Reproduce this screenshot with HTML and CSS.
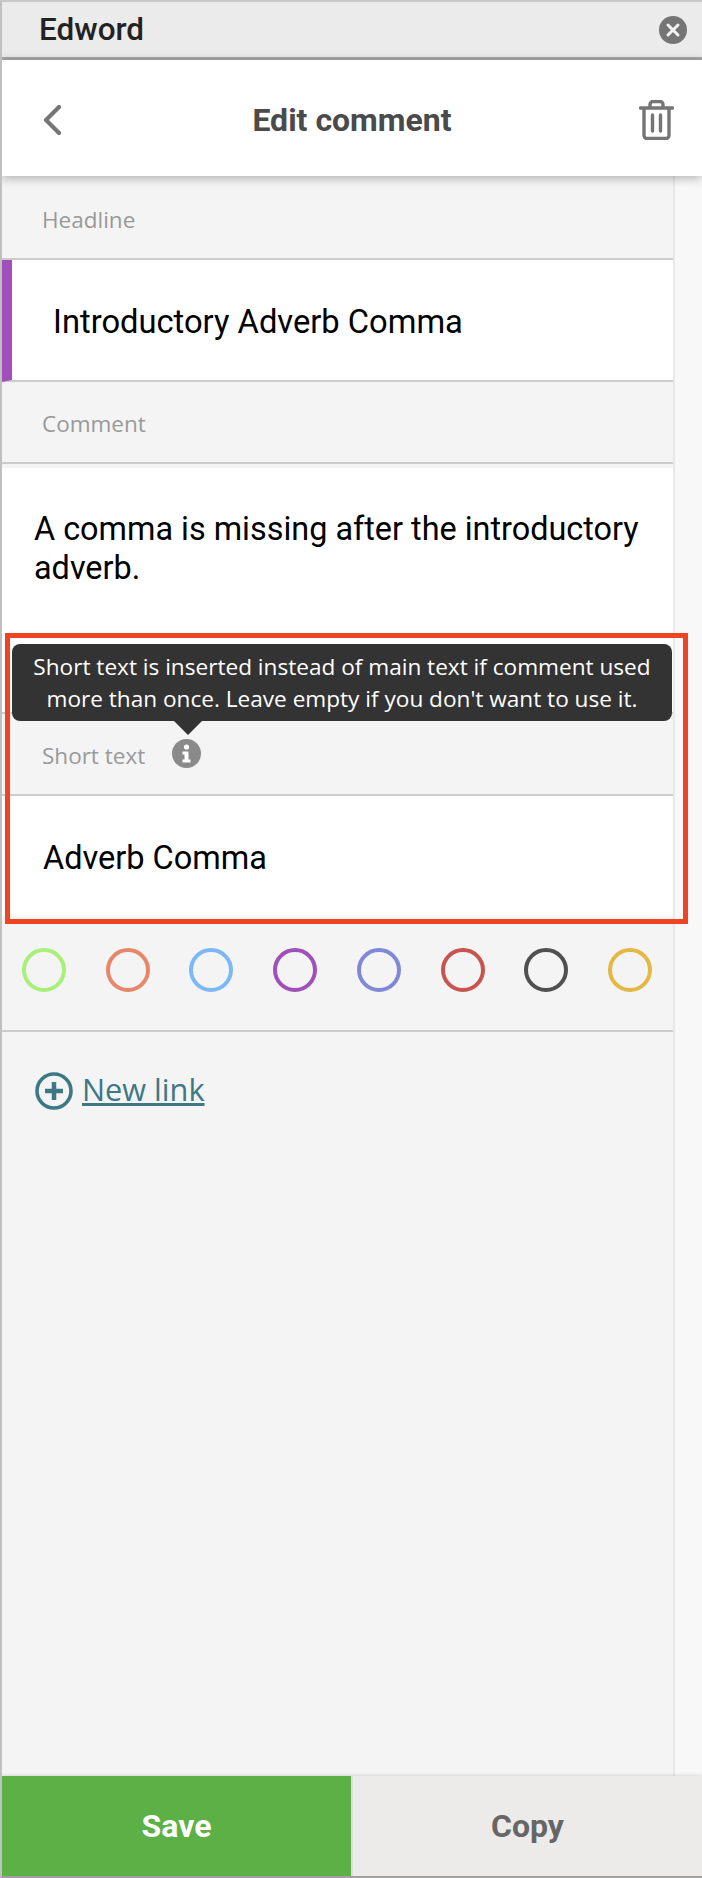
FILE: index.html
```html
<!DOCTYPE html>
<html>
	<head>
		<meta charset="utf-8">
		<title>Edword - Edit comment</title>
		<link rel="stylesheet" href="styles.css">
	</head>
	<body>
		<div class="window">
			<div class="titlebar">
				<span class="app-name">Edword</span>
				<svg class="close-icon" width="28" height="28" viewBox="0 0 28 28">
					<circle cx="14" cy="14" r="14" fill="#757575"/>
					<path d="M9 9l10 10M19 9l-10 10" stroke="#f2f2f2" stroke-width="3" stroke-linecap="round"/>
				</svg>
			</div>
			<div class="header">
				<svg class="back-icon" width="18" height="30" viewBox="0 0 18 30">
					<path d="M16 2L3 15l13 13" fill="none" stroke="#757575" stroke-width="4.200" stroke-linecap="round" stroke-linejoin="round"/>
				</svg>
				<h1 class="header-title">Edit comment</h1>
				<svg class="trash-icon" width="35" height="40" viewBox="0 0 35 40">
					<path d="M1.500 8h32M11 8V4.500a3 3 0 0 1 3-3h7a3 3 0 0 1 3 3V8M5 8v27.500a3 3 0 0 0 3 3h19a3 3 0 0 0 3-3V8M13.500 15v16M21.500 15v16" fill="none" stroke="#757575" stroke-width="3.400" stroke-linecap="round" stroke-linejoin="round"/>
				</svg>
			</div>
			<div class="panel">
				<div class="form">
					<div class="label-row label-first">Headline</div>
					<div class="field headline">Introductory Adverb Comma</div>
					<div class="label-row">Comment</div>
					<div class="comment-wrap">
						<div class="comment">A comma is missing after the introductory adverb.</div>
					</div>
					<div class="label-row short-label">
						Short text
						<svg class="info-icon" width="29" height="29" viewBox="0 0 29 29">
							<circle cx="14.500" cy="14.500" r="14.500" fill="#8a8a8a"/>
							<circle cx="14.500" cy="8" r="2.600" fill="#fff"/>
							<path d="M10.500 12.500h6v8h2v3h-8v-3h2v-5h-2z" fill="#fff"/>
						</svg>
					</div>
					<div class="field short-field">Adverb Comma</div>
					<div class="colors">
						<span class="dot dot-green"></span>
						<span class="dot dot-orange"></span>
						<span class="dot dot-blue"></span>
						<span class="dot dot-purple"></span>
						<span class="dot dot-indigo"></span>
						<span class="dot dot-red"></span>
						<span class="dot dot-black"></span>
						<span class="dot dot-yellow"></span>
					</div>
					<div class="links">
						<svg class="plus-icon" width="38" height="38" viewBox="0 0 38 38">
							<circle cx="19" cy="19" r="17" fill="none" stroke="#3d7885" stroke-width="3.600"/>
							<path d="M10 19h18M19 10v18" stroke="#3d7885" stroke-width="4.500"/>
						</svg>
						<a class="new-link" href="#">New link</a>
					</div>
				</div>
				<div class="track"></div>
			</div>
			<div class="footer">
				<div class="btn btn-save">Save</div>
				<div class="btn btn-copy">Copy</div>
			</div>
			<div class="tooltip">
				Short text is inserted instead of main text if comment used<br>
				more than once. Leave empty if you don't want to use it.
			</div>
			<div class="highlight"></div>
		</div>
	</body>
</html>
```

FILE: styles.css
```css
body
{
	margin: 0;
	background: #f4f4f4;
	font-family: "Roboto", "Liberation Sans", sans-serif;
}

.window
{
	position: relative;
	display: flex;
	flex-direction: column;
	box-sizing: border-box;
	width: 702px;
	height: 1878px;
	overflow: hidden;
	border-top: 2px solid #c8c8c8;
	border-bottom: 2px solid #a0a0a0;
	border-left: 2px solid #c0c0c0;
}

.titlebar
{
	display: flex;
	align-items: center;
	justify-content: space-between;
	box-sizing: border-box;
	height: 58px;
	padding: 0 15px 0 37px;
	background: #ebebeb;
	border-bottom: 3px solid #a8a8a8;
}
.app-name
{
	font-size: 31.500px;
	font-weight: 500;
	color: #222222;
}

.header
{
	position: relative;
	z-index: 2;
	display: flex;
	align-items: center;
	justify-content: space-between;
	box-sizing: border-box;
	height: 116px;
	padding: 4px 28px 0 41px;
	background: white;
	box-shadow: 0 2px 10px rgba(0, 0, 0, 0.3);
}
.header-title
{
	margin: 0 0 0 4px;
	font-size: 32px;
	font-weight: 700;
	color: #4a4a4a;
}

.panel
{
	display: flex;
	flex: 1;
}
.form
{
	width: 671px;
}
.track
{
	flex: 1;
	background: #f8f8f8;
	border-left: 2px solid #e8e8e8;
}

.label-row
{
	display: flex;
	align-items: center;
	gap: 27px;
	box-sizing: border-box;
	height: 82px;
	padding: 2px 0 0 40px;
	font-family: "Open Sans", sans-serif;
	font-size: 22.500px;
	color: #999999;
	background: #f4f4f4;
	border-bottom: 2px solid #cccccc;
}
.label-first
{
	height: 84px;
	padding-top: 4px;
}
.info-icon
{
	margin-top: -4px;
}

.field
{
	display: flex;
	align-items: center;
	box-sizing: border-box;
	height: 122px;
	padding-top: 4px;
	font-size: 32.700px;
	color: black;
	background: white;
	border-bottom: 2px solid #cccccc;
}
.headline
{
	padding-left: 41px;
	border-left: 10px solid #a050b8;
}
.short-field
{
	height: 120px;
	padding-left: 41px;
	font-size: 32.500px;
	border-bottom: 0;
}

.comment-wrap
{
	box-sizing: border-box;
	height: 250px;
	padding-top: 4px;
	background: #f4f4f4;
	border-bottom: 2px solid #cccccc;
}
.comment
{
	box-sizing: border-box;
	height: 244px;
	padding: 42px 20px 0 32px;
	font-size: 32.400px;
	line-height: 39px;
	color: black;
	background: white;
}

.colors
{
	display: flex;
	justify-content: space-between;
	box-sizing: border-box;
	height: 116px;
	padding: 32px 21px 0 20px;
	border-bottom: 2px solid #cccccc;
}
.dot
{
	box-sizing: border-box;
	width: 44px;
	height: 44px;
	border: 4px solid;
	border-radius: 50%;
}
.dot-green { border-color: #a8f07a; }
.dot-orange { border-color: #e8866a; }
.dot-blue { border-color: #7cb8f5; }
.dot-purple { border-color: #a050b8; }
.dot-indigo { border-color: #8088d8; }
.dot-red { border-color: #c85450; }
.dot-black { border-color: #505050; }
.dot-yellow { border-color: #e4b844; }

.links
{
	display: flex;
	align-items: center;
	gap: 9px;
	padding: 40px 0 0 33px;
}
.new-link
{
	margin-top: -4px;
	font-family: "Open Sans", sans-serif;
	font-size: 30.700px;
	color: #3d7885;
}

.footer
{
	position: relative;
	z-index: 2;
	display: flex;
	height: 100px;
	box-shadow: 0 -1px 3px rgba(0, 0, 0, 0.12);
}
.btn
{
	display: flex;
	align-items: center;
	justify-content: center;
	flex: 1;
	font-size: 32px;
	font-weight: 700;
}
.btn-save
{
	color: white;
	background: #5cb045;
	border-right: 2px solid #dddddd;
}
.btn-copy
{
	color: #666666;
	background: #ecebe9;
}

.tooltip
{
	position: absolute;
	top: 642px;
	left: 10px;
	box-sizing: border-box;
	width: 660px;
	height: 77px;
	padding-top: 7px;
	font-family: "Open Sans", sans-serif;
	font-size: 22.600px;
	line-height: 32px;
	text-align: center;
	color: white;
	background: #333333;
	border-radius: 8px;
}
.tooltip::after
{
	content: "";
	position: absolute;
	top: 77px;
	left: 162px;
	border-top: 14px solid #333333;
	border-right: 14px solid transparent;
	border-left: 14px solid transparent;
}

.highlight
{
	position: absolute;
	top: 631px;
	left: 3px;
	box-sizing: border-box;
	width: 683px;
	height: 291px;
	border: 5px solid #ee4423;
}
```
